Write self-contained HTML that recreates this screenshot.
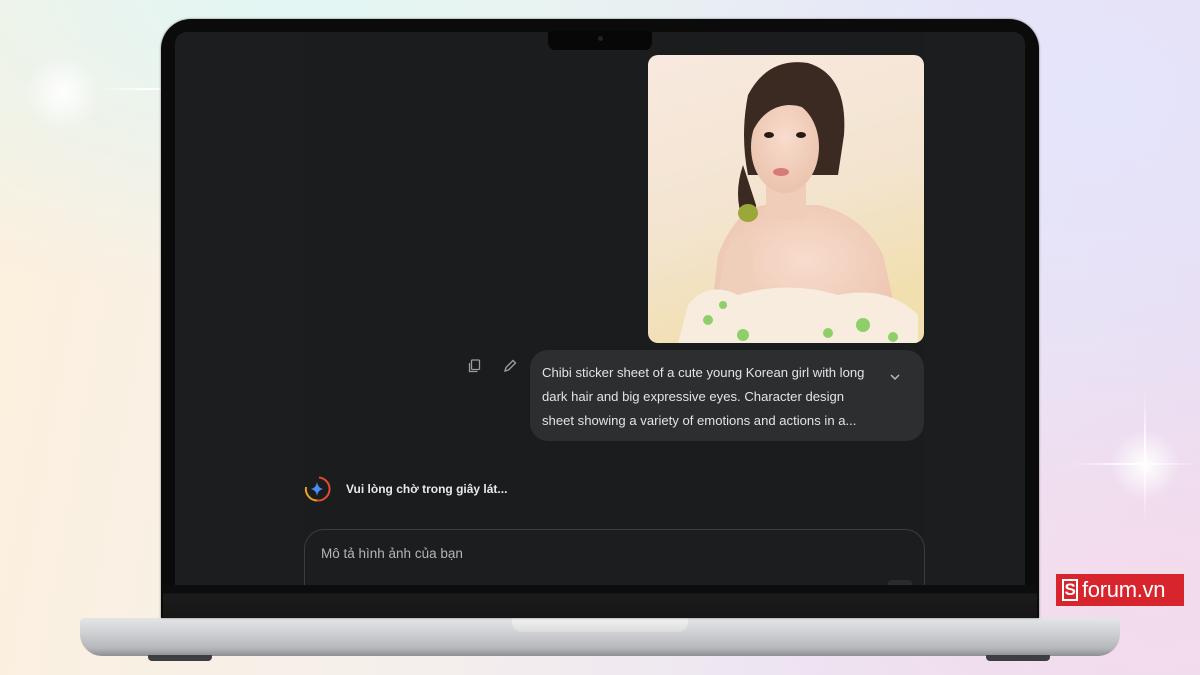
<!DOCTYPE html>
<html><head><meta charset="utf-8"><style>
*{margin:0;padding:0;box-sizing:border-box}
body{width:1200px;height:675px;overflow:hidden;position:relative;font-family:"Liberation Sans",sans-serif;
background:linear-gradient(100deg,#fdf0dd 0%,#f6f0ea 35%,#ece6f4 70%,#ecdcf0 100%);}
.bgtop{position:absolute;inset:0;background:radial-gradient(ellipse 700px 300px at 300px 0,#e2f6f4 0%,rgba(226,246,244,0) 100%),radial-gradient(ellipse 600px 400px at 1100px 100px,#e4e4fb 0%,rgba(228,228,251,0) 100%),radial-gradient(ellipse 500px 300px at 1150px 600px,#f3dcec 0%,rgba(243,220,236,0) 100%);}
.abs{position:absolute}
.body{left:161px;top:19px;width:878px;height:599px;background:#0b0b0c;border-radius:30px 30px 0 0;box-shadow:0 0 2px #777}
.screen{left:175px;top:32px;width:850px;height:553px;background:#1c1d1f;border-radius:12px 12px 0 0;overflow:hidden}
.notch{left:548px;top:31px;width:104px;height:19px;background:#070707;border-radius:0 0 7px 7px}
.chin{left:163px;top:585px;width:874px;height:33px;background:linear-gradient(#0d0d0d 0,#0d0d0d 8px,#1b1b1c 9px,#161617 100%)}
.base{left:80px;top:618px;width:1040px;height:38px;border-radius:4px 4px 22px 22px;background:linear-gradient(#e4e5e7 0,#cfd0d3 40%,#b5b6b9 80%,#8e8f92 100%)}
.lip{left:512px;top:618px;width:176px;height:14px;border-radius:0 0 10px 10px;background:linear-gradient(#f2f2f3,#dcdcde)}
.foot{top:655px;width:64px;height:6px;background:#3d3e41;border-radius:0 0 4px 4px}
.photo{left:648px;top:55px;width:276px;height:288px;border-radius:10px;overflow:hidden}
.bubble{left:530px;top:350px;width:394px;height:91px;background:#2d2e30;border-radius:18px;color:#e3e3e3;font-size:13.1px;line-height:24px;padding:11px 0 0 12px}
.wait{left:346px;top:482px;color:#e8e8e8;font-size:12px;font-weight:bold}
.input{left:129px;top:497px;width:621px;height:90px;border:1px solid #3b3c3e;border-radius:20px;background:#1c1d1f}
.ph{left:321px;top:546px;color:#b5b5b5;font-size:13.5px}
.badge{left:1056px;top:574px;width:128px;height:32px;background:#d8242c;color:#fff;font-size:22px;line-height:32px;padding-left:26px;letter-spacing:-0.3px}
.badge .s{position:absolute;left:6px;top:5px;width:16px;height:22px;border:2px solid #fff;font-size:17px;line-height:18px;text-align:center;font-weight:bold}
.spark{border-radius:50%;background:radial-gradient(circle,#fff 0,rgba(255,255,255,.7) 20%,rgba(255,255,255,0) 70%)}
</style></head><body>
<div class="bgtop"></div>
<div class="abs spark" style="left:25px;top:55px;width:75px;height:75px"></div>
<div class="abs" style="left:95px;top:88px;width:110px;height:2px;background:linear-gradient(90deg,rgba(255,255,255,0),#fff,rgba(255,255,255,0))"></div>
<div class="abs spark" style="left:1110px;top:430px;width:70px;height:70px"></div>
<div class="abs" style="left:1070px;top:463px;width:130px;height:2px;background:linear-gradient(90deg,rgba(255,255,255,0),#fff,rgba(255,255,255,0))"></div>
<div class="abs" style="left:1144px;top:390px;width:2px;height:130px;background:linear-gradient(rgba(255,255,255,0),#fff,rgba(255,255,255,0))"></div>

<div class="abs base"></div>
<div class="abs lip"></div>
<div class="abs foot" style="left:148px"></div>
<div class="abs foot" style="left:986px"></div>
<div class="abs body"></div>
<div class="abs chin"></div>
<div class="abs screen">
  <div class="abs" style="left:129px;top:0;width:621px;height:553px;background:#1b1c1e"></div>
  <div class="abs input"></div>
  <div class="abs" style="left:712px;top:548px;width:26px;height:10px;border-radius:13px;background:#2a2b2d"></div>
</div>
<div class="abs notch"><div class="abs" style="left:50px;top:5px;width:5px;height:5px;border-radius:50%;background:#222"></div></div>

<div class="abs photo">
<svg width="276" height="288" viewBox="0 0 276 288">
<defs><linearGradient id="bg" x1="0" y1="0" x2="0.3" y2="1"><stop offset="0" stop-color="#f8e9e0"/><stop offset="0.6" stop-color="#f3e4cf"/><stop offset="1" stop-color="#f1dfb0"/></linearGradient>
<radialGradient id="sk" cx="0.5" cy="0.4" r="0.6"><stop offset="0" stop-color="#f8dccd"/><stop offset="1" stop-color="#ebc3ad"/></radialGradient></defs>
<rect width="276" height="288" fill="url(#bg)"/>
<path d="M100 40 Q120 2 160 8 Q200 20 196 80 L190 120 L100 120 Q92 80 100 40Z" fill="#3a2a22"/>
<path d="M95 110 Q85 140 95 165 Q100 200 80 250 L90 260 Q110 200 108 150Z" fill="#3a2a22"/>
<path d="M70 200 Q90 150 120 150 L170 150 Q215 160 235 200 L255 288 L60 288Z" fill="url(#sk)"/>
<rect x="118" y="120" width="40" height="45" fill="#efcdb8"/>
<ellipse cx="137" cy="92" rx="34" ry="46" fill="url(#sk)"/>
<path d="M103 80 Q108 40 140 36 Q175 40 176 80 Q170 50 140 50 Q115 52 103 80Z" fill="#3a2a22"/>
<ellipse cx="121" cy="80" rx="5" ry="3" fill="#2a1a15"/><ellipse cx="153" cy="80" rx="5" ry="3" fill="#2a1a15"/>
<ellipse cx="133" cy="117" rx="8" ry="4" fill="#d77b78"/>
<path d="M70 250 Q75 185 92 180 Q108 185 105 230 L100 260Z" fill="#f0cfba"/>
<ellipse cx="100" cy="158" rx="10" ry="9" fill="#9aa83a"/>
<path d="M40 250 Q60 225 90 240 Q140 225 190 240 Q240 230 270 260 L270 288 L30 288Z" fill="#f7ecdd"/>
<g fill="#8fcf6a"><circle cx="60" cy="265" r="5"/><circle cx="95" cy="280" r="6"/><circle cx="180" cy="278" r="5"/><circle cx="215" cy="270" r="7"/><circle cx="245" cy="282" r="5"/><circle cx="75" cy="250" r="4"/></g>
</svg></div>

<svg class="abs" style="left:467px;top:358px" width="16" height="16" viewBox="0 0 16 16" fill="none" stroke="#9a9a9a" stroke-width="1.3"><rect x="4.5" y="2" width="8" height="9.5" rx="1"/><path d="M2.5 5v8.5h8"/></svg>
<svg class="abs" style="left:502px;top:358px" width="16" height="16" viewBox="0 0 16 16" fill="none" stroke="#9a9a9a" stroke-width="1.4"><path d="M3 13l1-3.5 7-7 2.5 2.5-7 7z"/></svg>

<div class="abs bubble">Chibi sticker sheet of a cute young Korean girl with long<br>dark hair and big expressive eyes. Character design<br>sheet showing a variety of emotions and actions in a...</div>
<svg class="abs" style="left:888px;top:370px" width="14" height="14" viewBox="0 0 14 14" fill="none" stroke="#bbb" stroke-width="1.5"><path d="M3 5l4 4 4-4"/></svg>

<svg class="abs" style="left:303px;top:475px" width="28" height="28" viewBox="0 0 28 28" fill="none"><path d="M16 2.5A11.5 11.5 0 0 1 14 25.5" stroke="#e04b2f" stroke-width="2"/><path d="M14 25.5A11.5 11.5 0 0 1 3 12" stroke="#e8a425" stroke-width="2"/><path d="M14 7 Q15 13 20 14 Q15 15 14 21 Q13 15 8 14 Q13 13 14 7Z" fill="#4a8af4"/></svg>
<div class="abs wait">Vui lòng chờ trong giây lát...</div>
<div class="abs ph">Mô tả hình ảnh của bạn</div>

<div class="abs badge"><span class="s">S</span>forum.vn</div>
</body></html>
